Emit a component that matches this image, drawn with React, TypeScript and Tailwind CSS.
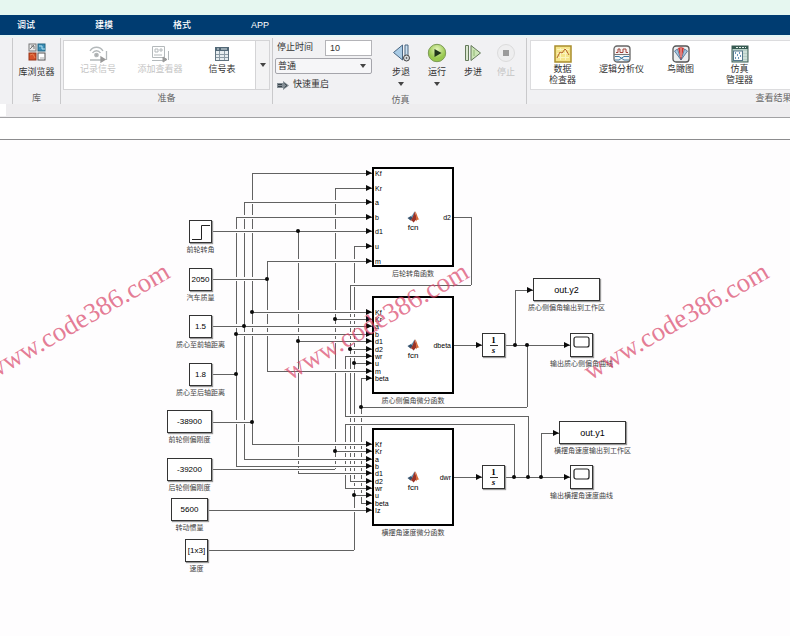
import type { ReactNode } from "react";

interface IWire {
  net: string;
  // x1, x2, y for horizontal; y1, y2, x for vertical
  from: number;
  to: number;
  at: number;
  arrow?: boolean;
}

interface IBlock {
  id: string;
  x: number;
  y: number;
  w: number;
  h: number;
  label?: string;
  content: ReactNode;
}

interface IFcnBlock {
  label: string;
  y: number;
  h: number;
  inputs: [string, number][];
  output: [string, number];
}

const tabs = ["调试", "建模", "格式", "APP"];

const horizontals: IWire[] = [
  { net: "kf", from: 252, to: 372, at: 33, arrow: true },
  { net: "kf", from: 252, to: 372, at: 172, arrow: true },
  { net: "kf", from: 252, to: 372, at: 304, arrow: true },
  { net: "kf", from: 212, to: 252, at: 282 },
  { net: "kr", from: 335, to: 372, at: 48, arrow: true },
  { net: "kr", from: 335, to: 372, at: 179, arrow: true },
  { net: "kr", from: 335, to: 372, at: 311, arrow: true },
  { net: "kr", from: 212, to: 335, at: 329 },
  { net: "a", from: 244, to: 372, at: 62, arrow: true },
  { net: "a", from: 212, to: 372, at: 186, arrow: true },
  { net: "a", from: 244, to: 372, at: 319, arrow: true },
  { net: "b", from: 236, to: 372, at: 77, arrow: true },
  { net: "b", from: 236, to: 372, at: 194, arrow: true },
  { net: "b", from: 236, to: 372, at: 326, arrow: true },
  { net: "b", from: 212, to: 236, at: 234 },
  { net: "d1", from: 212, to: 372, at: 91, arrow: true },
  { net: "d1", from: 298, to: 372, at: 201, arrow: true },
  { net: "d1", from: 298, to: 372, at: 333, arrow: true },
  { net: "m", from: 212, to: 267, at: 139 },
  { net: "m", from: 267, to: 372, at: 121, arrow: true },
  { net: "m", from: 267, to: 372, at: 231, arrow: true },
  { net: "u", from: 208, to: 354, at: 410 },
  { net: "u", from: 354, to: 372, at: 106, arrow: true },
  { net: "u", from: 354, to: 372, at: 223, arrow: true },
  { net: "u", from: 354, to: 372, at: 355, arrow: true },
  { net: "d2", from: 454, to: 471, at: 77 },
  { net: "d2", from: 350, to: 471, at: 145 },
  { net: "d2", from: 350, to: 372, at: 209, arrow: true },
  { net: "d2", from: 350, to: 372, at: 341, arrow: true },
  { net: "wr", from: 345, to: 372, at: 216, arrow: true },
  { net: "wr", from: 345, to: 528, at: 276 },
  { net: "wr", from: 345, to: 514, at: 284 },
  { net: "wr", from: 345, to: 372, at: 348, arrow: true },
  { net: "beta", from: 361, to: 372, at: 238, arrow: true },
  { net: "beta", from: 361, to: 527, at: 267 },
  { net: "beta", from: 361, to: 372, at: 363, arrow: true },
  { net: "iz", from: 208, to: 372, at: 370, arrow: true },
  { net: "dbeta", from: 454, to: 482, at: 205, arrow: true },
  { net: "beta", from: 505, to: 570, at: 205, arrow: true },
  { net: "beta", from: 515, to: 533, at: 150, arrow: true },
  { net: "dwr", from: 454, to: 482, at: 337, arrow: true },
  { net: "wr", from: 505, to: 570, at: 337, arrow: true },
  { net: "wr", from: 541, to: 559, at: 293, arrow: true },
];

const verticals: IWire[] = [
  { net: "kf", from: 33, to: 304, at: 252 },
  { net: "kr", from: 48, to: 329, at: 335 },
  { net: "a", from: 62, to: 319, at: 244 },
  { net: "b", from: 77, to: 326, at: 236 },
  { net: "d1", from: 91, to: 333, at: 298 },
  { net: "m", from: 121, to: 231, at: 267 },
  { net: "u", from: 106, to: 410, at: 354 },
  { net: "d2", from: 77, to: 145, at: 471 },
  { net: "d2", from: 145, to: 341, at: 350 },
  { net: "wr", from: 216, to: 276, at: 345 },
  { net: "wr", from: 284, to: 348, at: 345 },
  { net: "wr", from: 276, to: 337, at: 528 },
  { net: "wr", from: 284, to: 337, at: 514 },
  { net: "wr", from: 293, to: 337, at: 541 },
  { net: "beta", from: 238, to: 363, at: 361 },
  { net: "beta", from: 205, to: 267, at: 527 },
  { net: "beta", from: 150, to: 205, at: 515 },
];

const junctions = [
  [252, 172], [252, 282], [335, 179], [335, 311], [244, 186], [236, 194], [236, 234],
  [298, 91], [298, 201], [267, 139], [354, 223], [354, 355], [350, 209], [361, 267],
  [515, 205], [527, 205], [514, 337], [528, 337], [541, 337],
];

const fcnBlocks: IFcnBlock[] = [
  {
    label: "后轮转角函数",
    y: 27,
    h: 100,
    inputs: [["Kf", 33], ["Kr", 48], ["a", 62], ["b", 77], ["d1", 91], ["u", 106], ["m", 121]],
    output: ["d2", 77],
  },
  {
    label: "质心侧偏角微分函数",
    y: 156,
    h: 98,
    inputs: [
      ["Kf", 172], ["Kr", 179], ["a", 186], ["b", 194], ["d1", 201],
      ["d2", 209], ["wr", 216], ["u", 223], ["m", 231], ["beta", 238],
    ],
    output: ["dbeta", 205],
  },
  {
    label: "横摆角速度微分函数",
    y: 288,
    h: 98,
    inputs: [
      ["Kf", 304], ["Kr", 311], ["a", 319], ["b", 326], ["d1", 333],
      ["d2", 341], ["wr", 348], ["u", 355], ["beta", 363], ["Iz", 370],
    ],
    output: ["dwr", 337],
  },
];

// vertical wires are interrupted where another signal crosses them
function verticalPath(v: IWire) {
  const crossings = horizontals
    .filter((h) => h.net !== v.net && h.from < v.at && h.to > v.at && h.at > v.from && h.at < v.to)
    .map((h) => h.at)
    .sort((a, b) => a - b);
  let d = `M${v.at} ${v.from}`;
  crossings.forEach((y) => {
    d += `V${Math.max(y - 2, v.from)}M${v.at} ${y + 2}`;
  });
  return d + `V${v.to}`;
}

function Wires() {
  return (
    <svg className="absolute left-0 top-0" width="790" height="496" aria-hidden="true">
      <g stroke="#626262" fill="none" shapeRendering="crispEdges">
        {verticals.map((v, i) => (
          <path key={i} d={verticalPath(v)} />
        ))}
        {horizontals.map((h, i) => (
          <path key={i} d={`M${h.from} ${h.at}H${h.to}`} />
        ))}
      </g>
      <g fill="#0a0a0a">
        {horizontals.filter((h) => h.arrow).map((h, i) => (
          <path key={i} d={`M${h.to} ${h.at}l-6 -3v6z`} />
        ))}
        {junctions.map(([x, y]) => (
          <circle key={`${x}-${y}`} cx={x} cy={y} r="2" />
        ))}
      </g>
    </svg>
  );
}

function MatlabLogo() {
  return (
    <svg width="13" height="12" viewBox="0 0 26 24" aria-hidden="true">
      <path d="M1 14 8 10 12 14 7 19z" fill="#36536f" />
      <path d="M8 10C12 9 13 2 16 1L12 14z" fill="#5d94b5" />
      <path d="M16 1C12 8 12 14 7 19c4-1 5 4 6 4 4-3 4-7 7-5z" fill="#9c3427" />
      <path d="M16 1c3 0 5 13 9 17-3-2-5 0-7 3 1-8 0-14-2-20z" fill="#d96a35" />
    </svg>
  );
}

function Fraction() {
  return (
    <div className="flex flex-col items-center font-['Liberation_Serif',serif] text-[9px] font-bold leading-[9px]">
      <span>1</span>
      <span className="w-2 border-t border-[#333] text-center italic">s</span>
    </div>
  );
}

function ScopeIcon() {
  return (
    <svg width="17" height="18" viewBox="0 0 17 18" aria-hidden="true">
      <rect x="1" y="1" width="15" height="10" rx="2" fill="#fff" stroke="#222" strokeWidth="1.2" />
    </svg>
  );
}

function StepIcon() {
  return (
    <svg width="20" height="20" viewBox="0 0 20 20" fill="none" stroke="#222" aria-hidden="true">
      <path d="M1 17.5H10.500V3.500H19" />
    </svg>
  );
}

const blocks: IBlock[] = [
  { id: "step", x: 189, y: 80, w: 23, h: 23, label: "前轮转角", content: <StepIcon /> },
  { id: "mass", x: 189, y: 128, w: 23, h: 23, label: "汽车质量", content: "2050" },
  { id: "lf", x: 189, y: 175, w: 23, h: 23, label: "质心至前轴距离", content: "1.5" },
  { id: "lr", x: 189, y: 223, w: 23, h: 23, label: "质心至后轴距离", content: "1.8" },
  { id: "kf", x: 167, y: 270, w: 45, h: 23, label: "前轮侧偏刚度", content: "-38900" },
  { id: "kr", x: 167, y: 318, w: 45, h: 23, label: "后轮侧偏刚度", content: "-39200" },
  { id: "iz", x: 171, y: 358, w: 37, h: 23, label: "转动惯量", content: "5600" },
  { id: "speed", x: 185, y: 399, w: 23, h: 23, label: "速度", content: "[1x3]" },
  { id: "int1", x: 482, y: 193, w: 23, h: 24, content: <Fraction /> },
  { id: "int2", x: 482, y: 325, w: 23, h: 24, content: <Fraction /> },
  { id: "out2", x: 533, y: 138, w: 67, h: 23, label: "质心侧偏角输出到工作区", content: <span className="text-[9px]">out.y2</span> },
  { id: "out1", x: 559, y: 281, w: 67, h: 23, label: "横摆角速度输出到工作区", content: <span className="text-[9px]">out.y1</span> },
  { id: "scope2", x: 570, y: 193, w: 23, h: 24, label: "输出质心侧偏角曲线", content: <ScopeIcon /> },
  { id: "scope1", x: 570, y: 325, w: 23, h: 24, label: "输出横摆角速度曲线", content: <ScopeIcon /> },
];

function BlockLabel({ children }: { children: ReactNode }) {
  return (
    <div className="absolute left-1/2 top-full mt-[3px] -translate-x-1/2 whitespace-nowrap text-[7px] leading-2 text-[#444]">
      {children}
    </div>
  );
}

function Block({ block }: { block: IBlock }) {
  const { x, y, w, h, label, content } = block;
  return (
    <div className="absolute" style={{ left: x, top: y, width: w, height: h }}>
      <div className="flex h-full items-center justify-center border border-[#333] bg-white font-['Liberation_Sans',sans-serif] text-[8px] leading-[10px] text-black shadow-[1px_1px_1px_#999]">
        {content}
      </div>
      {label && <BlockLabel>{label}</BlockLabel>}
    </div>
  );
}

function FcnBlock({ block }: { block: IFcnBlock }) {
  const { label, y, h, inputs, output } = block;
  return (
    <div className="absolute left-[372px] w-[82px]" style={{ top: y, height: h }}>
      <div className="flex h-full flex-col items-center justify-center border-2 border-black bg-white font-['Liberation_Sans',sans-serif] text-[8px] leading-[10px] text-black">
        <div className="flex flex-col items-center pt-[10px]">
          <MatlabLogo />
          <span>fcn</span>
        </div>
      </div>
      <div className="font-['Liberation_Sans',sans-serif] text-[7px] leading-[7px] text-black">
        {inputs.map(([name, py]) => (
          <span key={name} className="absolute left-[3px] -translate-y-1/2" style={{ top: py - y }}>
            {name}
          </span>
        ))}
        <span className="absolute right-[3px] -translate-y-1/2" style={{ top: output[1] - y }}>
          {output[0]}
        </span>
      </div>
      <BlockLabel>{label}</BlockLabel>
    </div>
  );
}

function Caret() {
  return (
    <svg width="6" height="4" viewBox="0 0 6 4" aria-hidden="true">
      <path d="M0 0h6L3 4z" fill="#444" />
    </svg>
  );
}

interface IToolButton {
  icon: ReactNode;
  label: string;
  sub?: string;
  caret?: boolean;
  disabled?: boolean;
  className: string;
}
function ToolButton({ icon, label, sub, caret, disabled, className }: IToolButton) {
  return (
    <button
      type="button"
      disabled={disabled}
      className={`flex shrink-0 flex-col items-center whitespace-nowrap leading-[11px] text-[#333] disabled:text-[#c4c4c4] ${className}`}
    >
      {icon}
      <span className="flex flex-col items-center">
        <span>{label}</span>
        {sub && <span>{sub}</span>}
      </span>
      {caret && <Caret />}
    </button>
  );
}

function LibraryIcon() {
  return (
    <svg width="18" height="18" viewBox="0 0 18 18" aria-hidden="true">
      <rect x="1" y="1" width="7" height="7" fill="#e9eaea" stroke="#777" />
      <path d="M2 6 6 2M3 3h3v3" stroke="#777" fill="none" />
      <rect x="10" y="1" width="7" height="7" fill="#3b8fb8" stroke="#246782" />
      <path d="M11 3h3v3h3" stroke="#b3e0ef" fill="none" />
      <rect x="1" y="10" width="7" height="7" fill="#d6522b" stroke="#963518" />
      <path d="m2 12 3-1 2 4" stroke="#e5814f" fill="none" />
      <rect x="10" y="10" width="7" height="7" fill="#fff" stroke="#555" />
      <path d="M12 15h4" stroke="#aaa" />
    </svg>
  );
}

function LogSignalIcon() {
  return (
    <svg width="20" height="18" viewBox="0 0 20 18" fill="none" stroke="#b4b9bb" strokeWidth="1.3" aria-hidden="true">
      <path d="M2 6C5 1 12 1 15 6M4.500 8c2-3 6-3 8 0" />
      <circle cx="8.500" cy="10" r="1.700" fill="#aaa" />
      <path d="M2 15h11M18.500 6v9" />
      <path d="m13 12 4 2.500-4 2.500z" fill="#999" stroke="#999" />
    </svg>
  );
}

function AddViewerIcon() {
  return (
    <svg width="20" height="18" viewBox="0 0 20 18" fill="none" stroke="#b4b9bb" aria-hidden="true">
      <path d="M2.500 1.500h12v11h-12zM5 4h3v3H5zM10 4h2v2h-2zM4 10h8M2 15.500h11M18.500 6v9" />
      <path d="m13 12 4 2.500-4 2.500z" fill="#999" stroke="#999" />
    </svg>
  );
}

function SignalTableIcon() {
  return (
    <svg width="16" height="18" viewBox="0 0 16 18" aria-hidden="true">
      <rect x="1.500" y="2.500" width="13" height="13" fill="#e7edf0" stroke="#627481" />
      <path d="M1 2h14v4H1z" fill="#526877" />
      <path d="M2 9.500h12M2 12.500h12M5.500 6v9M10.500 6v9" stroke="#8c9ba5" />
      <path d="M3 4h2M7 4h6" stroke="#dce6eb" />
    </svg>
  );
}

function StepBackIcon() {
  return (
    <svg width="19" height="20" viewBox="0 0 19 20" stroke="#4a6682" aria-hidden="true">
      <path d="M10.500 2v15L1.500 9.500z" fill="#a9cbe5" />
      <path d="M13 2h3v15h-3z" fill="#cbe0f0" />
      <circle cx="14.500" cy="15" r="3" fill="#d5dade" stroke="#444" />
      <circle cx="14.500" cy="15" r="0.800" fill="#333" stroke="none" />
    </svg>
  );
}

function RunIcon() {
  return (
    <svg width="20" height="20" viewBox="0 0 20 20" aria-hidden="true">
      <defs>
        <radialGradient id="run" cy="0.3">
          <stop offset="0" stopColor="#e4f5bc" />
          <stop offset="1" stopColor="#98c84e" />
        </radialGradient>
      </defs>
      <circle cx="10" cy="10" r="8.700" fill="url(#run)" stroke="#7d9b56" />
      <path d="m7.500 6 7 4-7 4z" fill="#20351b" />
    </svg>
  );
}

function StepForwardIcon() {
  return (
    <svg width="18" height="20" viewBox="0 0 18 20" stroke="#64795a" aria-hidden="true">
      <path d="M1.500 2.500h3v15h-3z" fill="#dae7cf" />
      <path d="m7 2.500 9.500 7.500L7 17.500z" fill="#cce5b5" />
      <path d="M10 7v6" stroke="#90b875" />
    </svg>
  );
}

function StopIcon() {
  return (
    <svg width="20" height="20" viewBox="0 0 20 20" aria-hidden="true">
      <circle cx="10" cy="10" r="8.500" fill="#eeeeef" stroke="#dcdcdc" />
      <path d="M7 7h6v6H7z" fill="#9b9b9b" />
    </svg>
  );
}

function RestartIcon() {
  return (
    <svg width="12" height="9" viewBox="0 0 12 9" aria-hidden="true">
      <path d="M0 2h6V0l6 4.500L6 9V7H0z" fill="#848e95" />
      <path d="M1 3.500h4M1 5.500h4M7.500 2.500l2.500 2-2.500 2" stroke="#39444c" fill="none" />
    </svg>
  );
}

function InspectorIcon() {
  return (
    <svg width="18" height="18" viewBox="0 0 18 18" fill="none" aria-hidden="true">
      <rect x="1" y="1" width="16" height="16" fill="#f5e58b" stroke="#a98d2c" strokeWidth="1.500" />
      <path d="M3 4.500h12M3 8.500h12M3 12.500h12M6.500 3v12M11.500 3v12" stroke="#fbf4bd" />
      <path d="m3 13 3-6 2 1 3-4 1 1 3 5" stroke="#b4632d" />
    </svg>
  );
}

function AnalyzerIcon() {
  return (
    <svg width="18" height="18" viewBox="0 0 18 18" fill="none" aria-hidden="true">
      <rect x="1" y="1" width="16" height="16" rx="3" fill="#f6f6f6" stroke="#666" strokeWidth="1.300" />
      <path d="M3 7.500h2V4h2v3.500h3V4h3v3.500h2" stroke="#a14239" />
      <path d="M1 9.500h16" stroke="#777" />
      <path d="M2 11.500h4l5 3.500h5M2 15h4l5-3.500h5" stroke="#3979a4" />
    </svg>
  );
}

function BirdEyeIcon() {
  return (
    <svg width="18" height="18" viewBox="0 0 18 18" aria-hidden="true">
      <rect x="1" y="1" width="16" height="16" rx="3" fill="#eceeef" stroke="#555" strokeWidth="1.300" />
      <path d="M9 15 2.500 6l3-2z" fill="#a9c8e2" stroke="#47698c" strokeWidth="0.800" />
      <path d="m9 15 6.500-9-3-2z" fill="#a9c8e2" stroke="#47698c" strokeWidth="0.800" />
      <path d="M9 15 6 3c2-1 4-1 6 0z" fill="#cc3936" />
      <path d="M9 3v9" stroke="#f5c1bb" />
    </svg>
  );
}

function ManagerIcon() {
  return (
    <svg width="18" height="18" viewBox="0 0 18 18" fill="none" aria-hidden="true">
      <rect x="1" y="1" width="16" height="16" fill="#b7cfc6" stroke="#3f5e56" />
      <path d="M1 2.500h16" stroke="#375b52" strokeWidth="3" />
      <path d="M13 6v10M15 6v10M5 2.500h10" stroke="#e5efeb" strokeDasharray="2 1" />
      <rect x="2.500" y="6" width="9" height="9.500" fill="#f8fbfc" stroke="#54768a" />
      <path d="M4 8h1M8 8h1M6 10h1M9 11h1M4 13h1M7 13h1" stroke="#3a75a2" strokeWidth="1.500" />
    </svg>
  );
}

function GroupTitle({ children }: { children: ReactNode }) {
  return <div className="mt-auto text-center leading-3 text-[#666]">{children}</div>;
}

function Toolstrip() {
  return (
    <div className="flex h-[66px] overflow-hidden pl-3">
      <section className="flex w-[49px] shrink-0 flex-col border-x border-[#c9c9cb]">
        <ToolButton className="gap-[6px] pt-[5px]" icon={<LibraryIcon />} label="库浏览器" />
        <GroupTitle>库</GroupTitle>
      </section>
      <section className="flex w-[212px] shrink-0 flex-col border-r border-[#c9c9cb] px-[2px] pt-[2px]">
        <div className="flex h-[50px] border border-[#d4d4d6] bg-white">
          <div className="flex flex-1 items-start pl-[3px] pt-1">
            <ToolButton disabled className="w-[62px] gap-px" icon={<LogSignalIcon />} label="记录信号" />
            <ToolButton disabled className="w-[62px] gap-px" icon={<AddViewerIcon />} label="添加查看器" />
            <ToolButton className="w-[62px] gap-px" icon={<SignalTableIcon />} label="信号表" />
          </div>
          <button type="button" aria-label="更多" className="flex w-[14px] items-center justify-center border-l border-[#d4d4d6] bg-[#f3f3f4]">
            <Caret />
          </button>
        </div>
        <GroupTitle>准备</GroupTitle>
      </section>
      <section className="flex w-[254px] shrink-0 flex-col border-r border-[#c9c9cb] pl-[2px]">
        <div className="flex items-start">
          <div className="flex w-[97px] flex-col gap-[2px] pt-[2px] text-[#333]">
            <div className="flex items-center justify-between">
              <label htmlFor="stop-time" className="pl-[2px]">停止时间</label>
              <input
                id="stop-time"
                defaultValue="10"
                className="h-4 w-[47px] border border-[#b4b4b8] bg-white px-1"
              />
            </div>
            <div className="relative">
              <select aria-label="仿真模式" className="block h-4 w-full appearance-none rounded-xs border border-[#a5a5ab] bg-[#f6f6f8] px-[2px] leading-[14px]">
                <option>普通</option>
              </select>
              <span className="pointer-events-none absolute inset-y-0 right-[6px] flex items-center">
                <Caret />
              </span>
            </div>
            <button type="button" className="flex h-[18px] items-center gap-1 pl-[2px]">
              <RestartIcon />
              快速重启
            </button>
          </div>
          <div className="flex pl-[11px] pt-[5px]">
            <ToolButton caret className="w-9 gap-1" icon={<StepBackIcon />} label="步退" />
            <ToolButton caret className="w-9 gap-1" icon={<RunIcon />} label="运行" />
            <ToolButton className="w-9 gap-1" icon={<StepForwardIcon />} label="步进" />
            <ToolButton disabled className="w-[30px] gap-1" icon={<StopIcon />} label="停止" />
          </div>
        </div>
        <GroupTitle>仿真</GroupTitle>
      </section>
      <section className="flex w-[490px] shrink-0 flex-col pl-[3px] pt-[2px]">
        <div className="flex h-[50px] items-start border border-[#dcdcde] bg-white pl-[2px] pt-1">
          <ToolButton className="w-[59px] gap-px" icon={<InspectorIcon />} label="数据" sub="检查器" />
          <ToolButton className="w-[59px] gap-px" icon={<AnalyzerIcon />} label="逻辑分析仪" />
          <ToolButton className="w-[59px] gap-px" icon={<BirdEyeIcon />} label="鸟瞰图" />
          <ToolButton className="w-[59px] gap-px" icon={<ManagerIcon />} label="仿真" sub="管理器" />
        </div>
        <GroupTitle>查看结果</GroupTitle>
      </section>
    </div>
  );
}

const watermarks = [
  { id: "left", x: 77 },
  { id: "middle", x: 376 },
  { id: "right", x: 676 },
];

export default function App() {
  return (
    <div className="flex min-h-screen flex-col overflow-hidden bg-[#fefdfe] font-['Liberation_Sans','Noto_Sans_CJK_SC',sans-serif] text-[9px]">
      <div className="h-[15px] bg-[#e6f7f0]" />
      <nav className="flex h-5 bg-[#003c71] text-white">
        {tabs.map((tab) => (
          <button key={tab} type="button" className="w-[78px] pl-[17px] pt-px text-left font-medium">
            {tab}
          </button>
        ))}
      </nav>
      <div className="border-t-2 border-[#e4f5f5] bg-[#f1f1f3] pt-px">
        <Toolstrip />
        <div className="h-[14px] border-b border-[#a2a2a4] bg-[#eeedef]">
          <div className="h-3 w-[6px] bg-white" />
        </div>
      </div>
      <div className="h-[22px] border-b border-[#8c8c8e] bg-white" />
      <main className="relative flex-1 overflow-hidden">
        <Wires />
        {fcnBlocks.map((b) => (
          <FcnBlock key={b.label} block={b} />
        ))}
        {blocks.map((b) => (
          <Block key={b.id} block={b} />
        ))}
        {watermarks.map((w) => (
          <div
            key={w.id}
            className="pointer-events-none absolute top-[181px] -translate-x-1/2 -translate-y-1/2 -rotate-[30deg] whitespace-nowrap font-['Liberation_Serif',serif] text-[27px] leading-8 text-[#d94468]/70"
            style={{ left: w.x }}
          >
            www.code386.com
          </div>
        ))}
      </main>
    </div>
  );
}
